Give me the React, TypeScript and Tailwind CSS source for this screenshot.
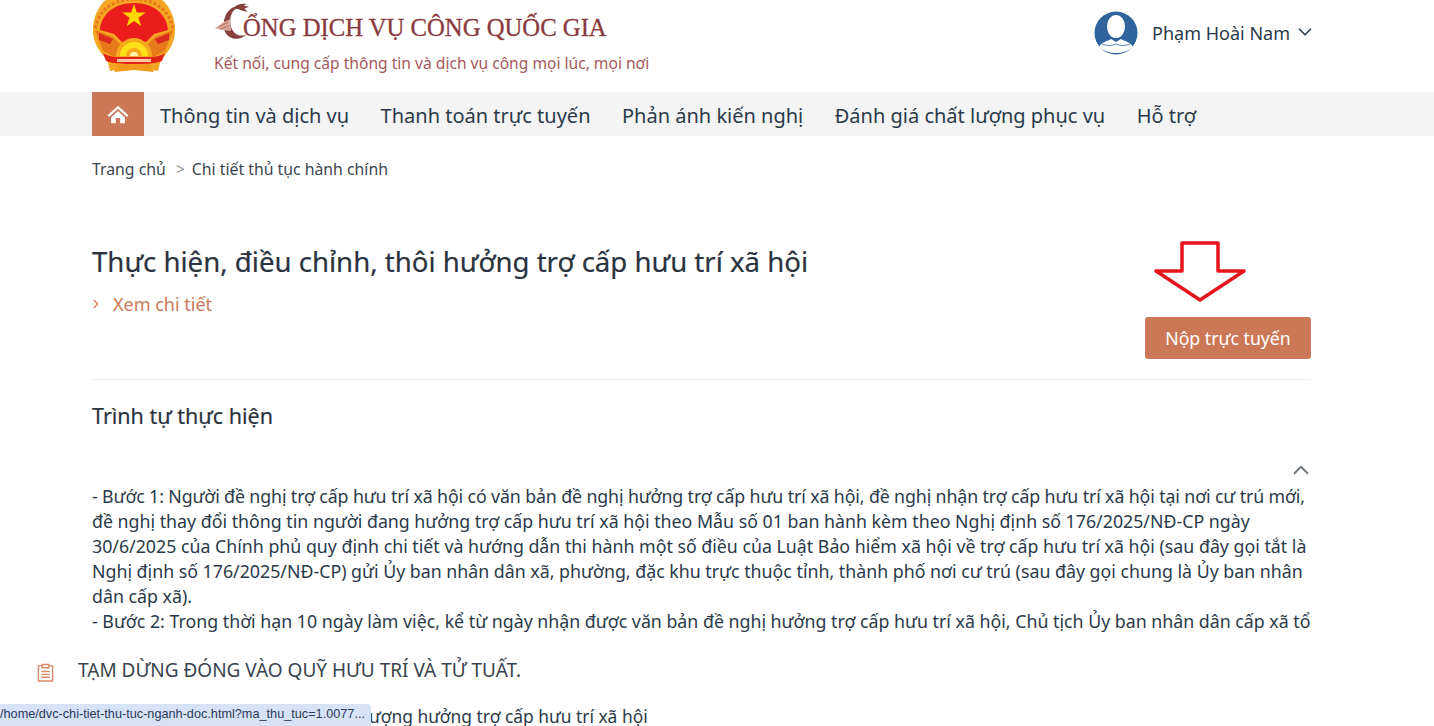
import { ChevronDown, ChevronRight, ChevronUp } from "lucide-react";

const NAV_ITEMS = [
  "Thông tin và dịch vụ",
  "Thanh toán trực tuyến",
  "Phản ánh kiến nghị",
  "Đánh giá chất lượng phục vụ",
  "Hỗ trợ",
];

const STEP_LINES = [
  "- Bước 1: Người đề nghị trợ cấp hưu trí xã hội có văn bản đề nghị hưởng trợ cấp hưu trí xã hội, đề nghị nhận trợ cấp hưu trí xã hội tại nơi cư trú mới,",
  "đề nghị thay đổi thông tin người đang hưởng trợ cấp hưu trí xã hội theo Mẫu số 01 ban hành kèm theo Nghị định số 176/2025/NĐ-CP ngày",
  "30/6/2025 của Chính phủ quy định chi tiết và hướng dẫn thi hành một số điều của Luật Bảo hiểm xã hội về trợ cấp hưu trí xã hội (sau đây gọi tắt là",
  "Nghị định số 176/2025/NĐ-CP) gửi Ủy ban nhân dân xã, phường, đặc khu trực thuộc tỉnh, thành phố nơi cư trú (sau đây gọi chung là Ủy ban nhân",
  "dân cấp xã).",
  "- Bước 2: Trong thời hạn 10 ngày làm việc, kể từ ngày nhận được văn bản đề nghị hưởng trợ cấp hưu trí xã hội, Chủ tịch Ủy ban nhân dân cấp xã tổ",
];

function Emblem() {
  return (
    <svg viewBox="0 0 84 76" className="h-[76px] w-[84px]">
      {/* rice wreath */}
      <path d="M42 -8C16 -8 2 10 1 30c-1 13 6 24 14 31l3 12 24-4 24 4 3-12c8-7 15-18 14-31C82 10 68-8 42-8z" fill="#f5a623" />
      <path d="M42 1C20 1 5 14 3 32" fill="none" stroke="#e8791a" strokeWidth="3" strokeDasharray="3 2" />
      <path d="M42 1C64 1 79 14 81 32" fill="none" stroke="#e8791a" strokeWidth="3" strokeDasharray="3 2" />
      {/* red field */}
      <path d="M42 5C23 5 9 16 8 32l14 4 8 8h24l8-8 14-4C75 16 61 5 42 5z" fill="#ea1c1c" />
      <path d="M42 6l2.800 8.500h9l-7.300 5.300 2.800 8.500-7.300-5.300-7.300 5.300 2.800-8.500-7.300-5.300h9z" fill="#ffd800" />
      {/* side ornaments */}
      <path d="M3 32l18 7 8 8-6 12-12-6z" fill="#e8791a" />
      <path d="M81 32l-18 7-8 8 6 12 12-6z" fill="#e8791a" />
      <path d="M7 35l14 6-3 5-11-4zM77 35l-14 6 3 5 11-4z" fill="#d92a1c" />
      {/* gear */}
      <path d="M24 58a18 18 0 0136 0z" fill="#f7a81b" />
      <path d="M28 58a14 14 0 0128 0z" fill="#ffe11a" />
      <path d="M34 58a8 8 0 0116 0z" fill="#f7a81b" />
      <path d="M38 58a4 4 0 018 0z" fill="#fff6b0" />
      {/* ribbon */}
      <path d="M11 55c8 5 16 4 31 4s23 1 31-4l-3 8c-8 3-18 3-28 3s-20 0-28-3z" fill="#e2231a" />
      <path d="M25 61h34v3H25z" fill="#f9c7a0" />
      <path d="M27 66h30l5 8-20-2-20 2z" fill="#f39a1d" />
    </svg>
  );
}

function BrandMark() {
  return (
    <svg viewBox="0 0 40 44" className="h-[44px] w-[36px] shrink-0">
      <path d="M32 6c-9-4-17 2-20 11-3 10-1 18 6 22 6 3 13 2 18-3-5 2-11 1-14-3-5-6-5-15-2-21 2-4 6-6 12-6z" fill="#874040" />
      <path d="M22 6c3-3 8-5 14-4l-3 2 6 1-5 2 3 4-7-2z" fill="#874040" />
      <path d="M1 29l10-7 7-3 1 13-10-1z" fill="#d8a999" />
      <path d="M6 27l10-5M7 30l10-4" stroke="#b9695c" strokeWidth="1" />
    </svg>
  );
}

function Avatar() {
  return (
    <svg viewBox="0 0 44 44" className="h-[44px] w-[44px] shrink-0">
      <circle cx="22" cy="22" r="21.500" fill="#2f659c" />
      <ellipse cx="22" cy="15.500" rx="9" ry="11.500" fill="#fff" />
      <path d="M5 36c2-5 9-6 12-8l5 3 5-3c3 2 10 3 12 8-9 8-25 8-34 0z" fill="#fff" />
      <path d="M8 33c6 2 9 2 14 0 5 2 8 2 14 0" fill="none" stroke="#2f659c" strokeWidth="0.800" />
    </svg>
  );
}

export default function App() {
  return (
    <div className="relative h-[726px] w-full overflow-hidden bg-white font-['Noto_Sans','Open_Sans',sans-serif] text-[#2b3a4a]">
      <header className="ml-[92px] mr-[123px] flex h-[92px] items-start">
        <div className="-mt-[2px] w-[84px] shrink-0">
          <Emblem />
        </div>
        <div className="ml-[38px] flex-1">
          <div className="flex h-[44px] items-end">
            <BrandMark />
            <span className="-ml-[7px] font-['Liberation_Serif',serif] text-[24.700px] font-medium leading-[32px] text-[#8a3a3e] [-webkit-text-stroke:0.300px_#8a3a3e]">
              ỔNG DỊCH VỤ CÔNG QUỐC GIA
            </span>
          </div>
          <p className="mt-[9px] text-[15.600px] leading-[20px] text-[#a5585c]">
            Kết nối, cung cấp thông tin và dịch vụ công mọi lúc, mọi nơi
          </p>
        </div>
        <div className="mt-[11px] flex items-center">
          <Avatar />
          <span className="ml-[14px] text-[18px] leading-[24px]">Phạm Hoài Nam</span>
          <ChevronDown className="mb-[3px] ml-[4px] -mr-[5px] h-[22px] w-[22px]" strokeWidth={1.800} />
        </div>
      </header>

      <nav className="flex h-[44px] bg-[#f4f4f4] pl-[92px]">
        <div className="flex h-[44px] w-[52px] items-center justify-center bg-[#cc7857]">
          <svg viewBox="0 0 24 22" className="h-[19px] w-[22px]" fill="#fff">
            <path d="M12 1L0 12l1.600 1.800L12 4.300l10.400 9.500L24 12z" />
            <path d="M4 14.500L12 7l8 7.500V21h-5.500v-6h-5v6H4z" />
          </svg>
        </div>
        <ul className="ml-4 flex gap-[31.500px] pt-[2px] text-[20px] leading-[44px]">
          {NAV_ITEMS.map((item) => (
            <li key={item}>{item}</li>
          ))}
        </ul>
      </nav>

      <main className="pl-[92px] pr-[123px]">
        <div className="flex h-[68px] items-center text-[15.800px] text-[#3c4650]">
          <span>Trang chủ</span>
          <span className="ml-[10px] mr-[7px] text-[#9a9a9a]">&gt;</span>
          <span>Chi tiết thủ tục hành chính</span>
        </div>

        <div className="mt-[37px] flex h-[139px] items-start justify-between border-b border-[#eeeeee]">
          <div>
            <h1 className="text-[27.600px] font-normal leading-[40px] text-[#2b3340] [-webkit-text-stroke:0.200px_#2b3340]">
              Thực hiện, điều chỉnh, thôi hưởng trợ cấp hưu trí xã hội
            </h1>
            <a className="mt-[11px] flex items-center text-[18px] leading-[24px] text-[#cc7857]">
              <ChevronRight className="-ml-[3px] h-[14px] w-[14px]" />
              <span className="ml-[10px]">Xem chi tiết</span>
            </a>
          </div>
          <div className="flex w-[166px] flex-col items-center">
            <svg viewBox="0 0 92 62" className="mr-[56px] h-[62px] w-[92px] shrink-0">
              <path d="M28 2h36v28h26L46 59 2 30h26z" fill="#fff" stroke="#e8141c" strokeWidth="3.500" strokeLinejoin="round" />
            </svg>
            <button className="mt-[14px] h-[42px] w-[166px] shrink-0 rounded-[3px] bg-[#cc7857] text-[17.700px] text-white">
              Nộp trực tuyến
            </button>
          </div>
        </div>

        <h2 className="mt-[20px] text-[21.500px] font-normal leading-[32px] text-[#2b3340] [-webkit-text-stroke:0.200px_#2b3340]">
          Trình tự thực hiện
        </h2>

        <div className="mt-[30px] flex h-[14px] justify-end">
          <ChevronUp className="-mr-[3px] -mt-[5px] h-[26px] w-[26px] shrink-0 text-[#6f7780]" strokeWidth={1.700} />
        </div>

        <div className="mt-[8px] h-[152px] overflow-hidden text-[17.770px] leading-[25px] text-[#2b3a4a]">
          {STEP_LINES.map((line) => (
            <p key={line} className="whitespace-nowrap first:tracking-[-0.120px]">{line}</p>
          ))}
        </div>
      </main>

      <div className="absolute left-[37px] top-[657px] flex items-center bg-white">
        <svg viewBox="0 0 18 20" className="mt-[5px] h-[19px] w-[17px]" fill="none" stroke="#d98a68" strokeWidth="1.500">
          <path d="M5.500 3H1.500v16h15V3h-4" />
          <path d="M5.500 1.500h7v3.500h-7z" />
          <path d="M4.500 9h9M4.500 12h9M4.500 15h9" />
        </svg>
        <span className="ml-[24px] text-[19px] leading-[26px] text-[#39434e]">TẠM DỪNG ĐÓNG VÀO QUỸ HƯU TRÍ VÀ TỬ TUẤT.</span>
      </div>

      <p className="absolute left-[369px] top-[707px] text-[17.400px] leading-[18px] text-[#2b3a4a]">ượng hưởng trợ cấp hưu trí xã hội</p>

      <div className="absolute bottom-0 left-0 flex h-[22px] w-[371px] items-center overflow-hidden rounded-tr-[4px] bg-[#d6e2f6] font-['Liberation_Sans',sans-serif] text-[12.700px] text-[#2a3a5a]">
        <span className="whitespace-nowrap">/home/dvc-chi-tiet-thu-tuc-nganh-doc.html?ma_thu_tuc=1.0077...</span>
      </div>
    </div>
  );
}
